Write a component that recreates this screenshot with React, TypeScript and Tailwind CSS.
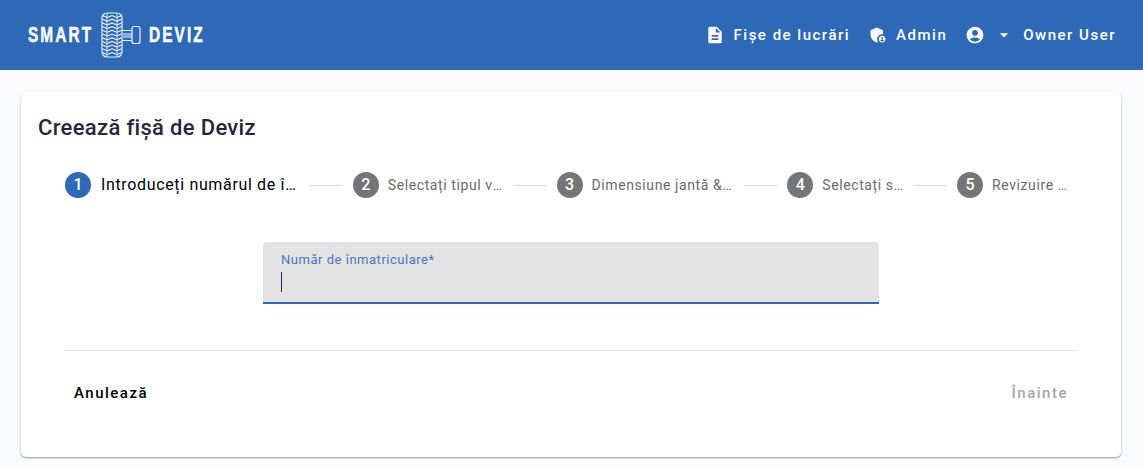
import { Fragment } from "react";
import type { ReactNode } from "react";

const steps = [
  { n: 1, label: "Introduceți numărul de înmatriculare", labelClass: "ml-[10px] w-[198px] text-base tracking-[0.65px] text-black", active: true },
  { n: 2, label: "Selectați tipul vehiculului", labelClass: "ml-[9px] w-[115px] text-sm tracking-[0.6px] text-[#6b6b6b]", active: false },
  { n: 3, label: "Dimensiune jantă & anvelopă", labelClass: "ml-[9px] w-[142px] text-sm tracking-[0.6px] text-[#6b6b6b]", active: false },
  { n: 4, label: "Selectați serviciile", labelClass: "ml-[9px] w-[81px] text-sm tracking-[0.6px] text-[#6b6b6b]", active: false },
  { n: 5, label: "Revizuire deviz", labelClass: "ml-[9px] w-[76px] text-sm tracking-[0.6px] text-[#6b6b6b]", active: false },
];

function Icon({ children, className }: { children: ReactNode; className?: string }) {
  return (
    <svg viewBox="0 0 24 24" fill="currentColor" className={className ?? "w-5 h-5"}>
      {children}
    </svg>
  );
}

function TireLogo() {
  const rows = [0, 1, 2, 3, 4, 5, 6, 7, 8, 9, 10];
  return (
    <svg viewBox="0 0 40 46" fill="none" stroke="#eef3fa" className="w-[40px] h-[46px]">
      <rect x="1" y="1" width="20" height="44" rx="5" strokeWidth="1.2" />
      <path d="M6 1.5v43M16 1.5v43" strokeWidth="0.9" />
      {rows.map((r) => (
        <path
          key={r}
          d={`M1.5 ${3.5 + r * 3.7}l4.5 2M20.5 ${3.5 + r * 3.7}l-4.5 2M6.5 ${5.5 + r * 3.7}l4.5 -2 4.5 2`}
          strokeWidth="1.1"
        />
      ))}
      <path d="M21 18.5h10M21 28.5h10" strokeWidth="1" />
      <path d="M21 23.5h10" strokeWidth="5" stroke="#8fb0dc" />
      <rect x="31" y="14.5" width="8" height="17" rx="2" strokeWidth="1.1" stroke="#ffffff" />
    </svg>
  );
}

function NavItem({ icon, label }: { icon: ReactNode; label: string }) {
  return (
    <div className="flex items-center gap-2">
      {icon}
      <span className="text-[15px] font-medium tracking-[1.5px]">{label}</span>
    </div>
  );
}

export default function App() {
  return (
    <div className="min-h-[468px] bg-[#f8fafc] font-['Roboto',sans-serif]">
      <header className="h-[70px] bg-[#2d69b7] text-white flex items-center justify-between pl-[28px] pr-[27px]">
        <div className="flex items-center">
          <div className="w-[73px]">
            <span className="block origin-left scale-x-[0.7] font-['Liberation_Sans',sans-serif] font-bold text-[22px] leading-none tracking-[3px] [-webkit-text-stroke:0.5px_white]">SMART</span>
          </div>
          <TireLogo />
          <div className="w-[60px] ml-[8px]">
            <span className="block origin-left scale-x-[0.7] font-['Liberation_Sans',sans-serif] font-bold text-[22px] leading-none tracking-[3px] [-webkit-text-stroke:0.5px_white]">DEVIZ</span>
          </div>
        </div>
        <nav className="flex items-center gap-[18px]">
          <NavItem
            label="Fișe de lucrări"
            icon={
              <Icon className="w-5 h-5 mr-px">
                <path d="M14 2H6c-1.1 0-1.99.9-1.99 2L4 20c0 1.1.89 2 1.99 2H18c1.1 0 2-.9 2-2V8l-6-6zm2 16H8v-2h8v2zm0-4H8v-2h8v2zm-3-5V3.5L18.5 9H13z" />
              </Icon>
            }
          />
          <NavItem
            label="Admin"
            icon={
              <Icon>
                <path d="M17 11c.34 0 .67.04 1 .09V6.27L10.5 3 3 6.27v4.91c0 4.54 3.2 8.79 7.5 9.82.55-.13 1.08-.32 1.6-.55-.69-.98-1.1-2.17-1.1-3.45 0-3.31 2.69-6 6-6z" />
                <path d="M17 13c-2.21 0-4 1.79-4 4s1.79 4 4 4 4-1.79 4-4-1.79-4-4-4zm0 1.38c.62 0 1.12.51 1.12 1.12s-.51 1.12-1.12 1.12-1.12-.51-1.12-1.12.5-1.12 1.12-1.12zm0 5.37c-.93 0-1.74-.46-2.24-1.17.05-.72 1.51-1.08 2.24-1.08s2.19.36 2.24 1.08c-.5.71-1.31 1.17-2.24 1.17z" />
              </Icon>
            }
          />
          <div className="flex items-center">
            <Icon className="w-5 h-5">
              <path d="M12 2C6.48 2 2 6.48 2 12s4.48 10 10 10 10-4.48 10-10S17.52 2 12 2zm0 4c1.93 0 3.5 1.57 3.5 3.5S13.93 13 12 13s-3.5-1.57-3.5-3.5S10.07 6 12 6zm0 14c-2.03 0-4.43-.82-6.14-2.88C7.55 15.8 9.68 15 12 15s4.45.8 6.14 2.12C16.43 19.18 14.03 20 12 20z" />
            </Icon>
            <Icon className="w-5 h-5 ml-[9px]">
              <path d="M7 10l5 5 5-5z" />
            </Icon>
            <span className="text-[15px] font-medium tracking-[1.5px] ml-[9px]">Owner User</span>
          </div>
        </nav>
      </header>

      <main className="pl-[21px] pr-[22px] pt-[22px] pb-[11px]">
        <div className="h-[365px] bg-white rounded-[5px] shadow-[0_1px_2px_rgba(0,0,0,0.4)] pt-[22px] px-[17px]">
          <h1 className="text-[22px] leading-[28px] font-medium tracking-[0.33px] text-[#1e293b]">Creează fișă de Deviz</h1>

          <div className="ml-[27px] mr-[27px] pr-[9px] mt-[30px] flex items-center">
            {steps.map((s, i) => (
              <Fragment key={s.n}>
                <div className={`flex-none w-[26px] h-[26px] rounded-full flex items-center justify-center text-white text-base font-medium ${s.active ? "bg-[#2d69b7]" : "bg-[#757575]"}`}>
                  {s.n}
                </div>
                <span className={`flex-none truncate ${s.labelClass}`}>{s.label}</span>
                {i < steps.length - 1 && <div className="flex-1 h-px bg-[#d9d9d9] mx-[10px]" />}
              </Fragment>
            ))}
          </div>

          <div className="mt-[44px] flex justify-center">
            <div className="w-[616px] h-[62px] bg-[#e3e3e3] rounded-t-[4px] border-b-2 border-[#2d69b7] px-[18px] pt-[9px]">
              <div className="text-[13px] leading-[17px] tracking-[0.52px] text-[#4279c1]">Număr de înmatriculare*</div>
              <div className="w-px h-[20px] bg-[#1f2937] mt-[4px]" />
            </div>
          </div>

          <div className="mx-[27px] mt-[46px] border-t border-[#e0e0e0] flex items-center justify-between px-[9px] pt-[31px]">
            <button className="text-[15px] font-medium tracking-[1.5px] text-black">Anulează</button>
            <button className="text-[15px] font-medium tracking-[1.5px] text-[#a6a6a6]">Înainte</button>
          </div>
        </div>
      </main>
    </div>
  );
}
